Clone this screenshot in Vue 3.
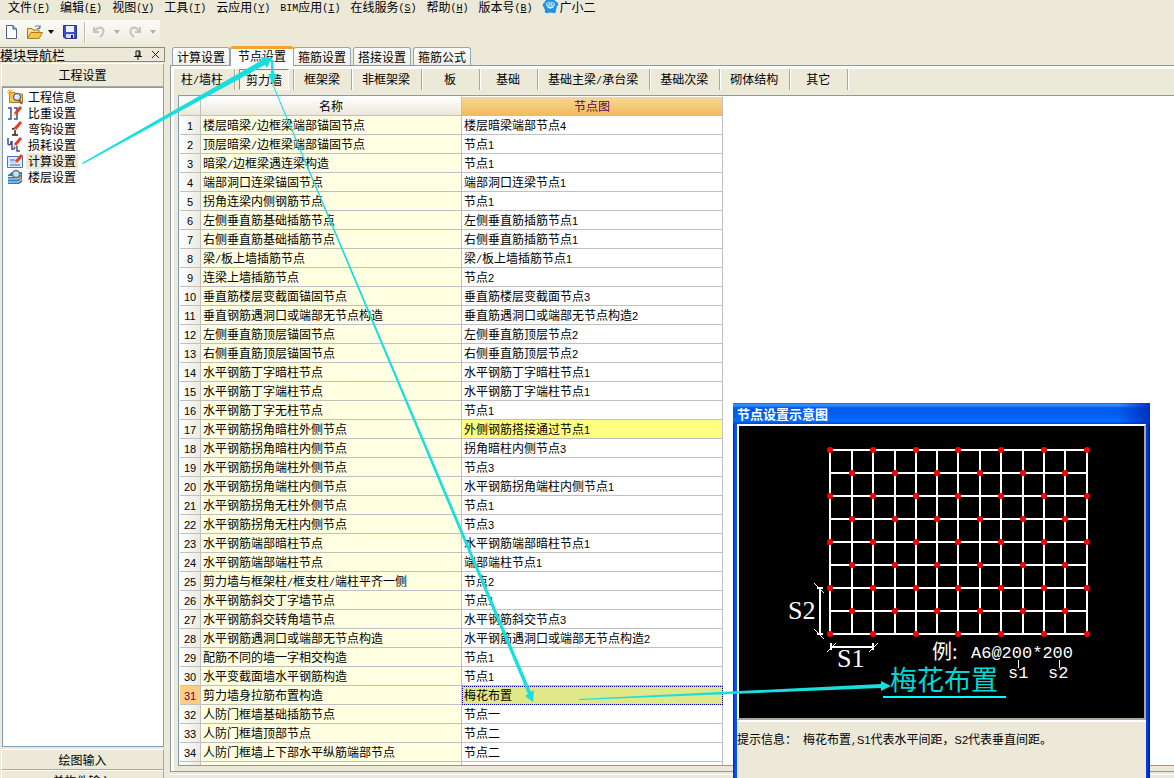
<script setup>
import { h, ref } from 'vue'

// Splits a label into CJK, alphanumeric and punctuation runs, each with its own face.
const Mixed = (props) =>
  (props.text.match(/[A-Za-z0-9]+|[^\w\u0100-\uffff]+|[\u0100-\uffff]+/g) || []).map((run) => {
    if (/^[A-Za-z0-9]/.test(run)) return h('span', { class: 'run-alnum' }, run)
    if (run.charCodeAt(0) < 256) return h('span', { class: 'run-punct' }, run)
    return run
  })
Mixed.props = ['text']

const menus = [
  ['文件', 'F'], ['编辑', 'E'], ['视图', 'V'], ['工具', 'T'], ['云应用', 'Y'],
  ['BIM应用', 'I'], ['在线服务', 'S'], ['帮助', 'H'], ['版本号', 'B'],
]
const tree = ['工程信息', '比重设置', '弯钩设置', '损耗设置', '计算设置', '楼层设置']
const tabs = ['计算设置', '节点设置', '箍筋设置', '搭接设置', '箍筋公式']
const parts = ['柱/墙柱', '剪力墙', '框架梁', '非框架梁', '板', '基础', '基础主梁/承台梁', '基础次梁', '砌体结构', '其它']
const activeTree = ref(4)
const activeTab = ref(1)
const activePart = ref(1)
const activeRow = ref(30)

const rows = [
  ['楼层暗梁/边框梁端部锚固节点', '楼层暗梁端部节点4'],
  ['顶层暗梁/边框梁端部锚固节点', '节点1'],
  ['暗梁/边框梁遇连梁构造', '节点1'],
  ['端部洞口连梁锚固节点', '端部洞口连梁节点1'],
  ['拐角连梁内侧钢筋节点', '节点1'],
  ['左侧垂直筋基础插筋节点', '左侧垂直筋插筋节点1'],
  ['右侧垂直筋基础插筋节点', '右侧垂直筋插筋节点1'],
  ['梁/板上墙插筋节点', '梁/板上墙插筋节点1'],
  ['连梁上墙插筋节点', '节点2'],
  ['垂直筋楼层变截面锚固节点', '垂直筋楼层变截面节点3'],
  ['垂直钢筋遇洞口或端部无节点构造', '垂直筋遇洞口或端部无节点构造2'],
  ['左侧垂直筋顶层锚固节点', '左侧垂直筋顶层节点2'],
  ['右侧垂直筋顶层锚固节点', '右侧垂直筋顶层节点2'],
  ['水平钢筋丁字暗柱节点', '水平钢筋丁字暗柱节点1'],
  ['水平钢筋丁字端柱节点', '水平钢筋丁字端柱节点1'],
  ['水平钢筋丁字无柱节点', '节点1'],
  ['水平钢筋拐角暗柱外侧节点', '外侧钢筋搭接通过节点1'],
  ['水平钢筋拐角暗柱内侧节点', '拐角暗柱内侧节点3'],
  ['水平钢筋拐角端柱外侧节点', '节点3'],
  ['水平钢筋拐角端柱内侧节点', '水平钢筋拐角端柱内侧节点1'],
  ['水平钢筋拐角无柱外侧节点', '节点1'],
  ['水平钢筋拐角无柱内侧节点', '节点3'],
  ['水平钢筋端部暗柱节点', '水平钢筋端部暗柱节点1'],
  ['水平钢筋端部端柱节点', '端部端柱节点1'],
  ['剪力墙与框架柱/框支柱/端柱平齐一侧', '节点2'],
  ['水平钢筋斜交丁字墙节点', '节点1'],
  ['水平钢筋斜交转角墙节点', '水平钢筋斜交节点3'],
  ['水平钢筋遇洞口或端部无节点构造', '水平钢筋遇洞口或端部无节点构造2'],
  ['配筋不同的墙一字相交构造', '节点1'],
  ['水平变截面墙水平钢筋构造', '节点1'],
  ['剪力墙身拉筋布置构造', '梅花布置'],
  ['人防门框墙基础插筋节点', '节点一'],
  ['人防门框墙顶部节点', '节点二'],
  ['人防门框墙上下部水平纵筋端部节点', '节点二'],
]
const changedRow = 16

// Wall mesh of the tie-bar diagram.
const gx = [91, 113, 134, 156, 177, 198, 219, 241, 262, 284, 305, 326, 348]
const gy = [24, 47, 70, 93, 116, 139, 162, 185, 208]
const dots = gy.flatMap((y, j) => gx.filter((_, i) => i % 2 === j % 2).map((x) => ({ x, y })))
</script>

<template>
  <div class="app">
    <nav class="menubar">
      <button v-for="[name, key] in menus" :key="key" class="menu" type="button">
        <template v-if="name.startsWith('BIM')"><span class="mono">BIM</span>{{ name.slice(3) }}</template>
        <template v-else>{{ name }}</template><span class="mono">(<u>{{ key }}</u>)</span>
      </button>
      <button class="menu user" type="button">
        <svg width="17" height="15" viewBox="0 0 17 15">
          <path d="M4 1Q8-1 12 1L16 4Q17 6 15 7L14 11Q14 15 11 14Q8 13 6 14Q2 15 3 11L1 7Q0 5 2 4Z" fill="#1b94e4" />
          <path d="M4 4Q8 1 13 4Q14 9 8 10Q3 9 4 4Z" fill="#64c8fa" />
          <circle cx="6" cy="5" r="1.6" fill="#fff" /><circle cx="11" cy="5" r="1.6" fill="#fff" />
          <circle cx="6" cy="5" r=".8" fill="#123" /><circle cx="11" cy="5" r=".8" fill="#123" />
          <path d="M6 8Q8 10 11 8" stroke="#fff" fill="none" />
        </svg>
        <span>广小二</span>
      </button>
    </nav>

    <div class="toolbar">
      <button type="button" aria-label="新建">
        <svg width="16" height="16" viewBox="0 0 16 16"><path d="M2.500 1.500H9L12.500 5V14.500H2.500Z" fill="#f8fbff" stroke="#54657d" /><path d="M9 1.500V5H12.500" fill="#b8d0ee" stroke="#34455d" /></svg>
      </button>
      <button type="button" aria-label="打开">
        <svg width="18" height="16" viewBox="0 0 18 16"><path d="M1.500 14V4.500H6L7 6H13V8" fill="#f8dc88" stroke="#9b762e" /><path d="M1.500 14.500L5 8.500H16.500L13 14.500Z" fill="#f9c64a" stroke="#a87a22" /><path d="M9 3Q12 0 14 4M14 1V4.500H11" fill="none" stroke="#4b6f98" /></svg>
      </button>
      <svg class="drop" width="6" height="4" viewBox="0 0 6 4"><path d="M0 0H6L3 4Z" fill="#111" /></svg>
      <button type="button" aria-label="保存">
        <svg width="16" height="16" viewBox="0 0 16 16"><path d="M1.500 1.500H14.500V14.500H3L1.500 13Z" fill="#3b50c8" stroke="#29348c" /><path d="M4 2H12V8H4Z" fill="#eef3ff" /><path d="M4 10H12V14H4Z" fill="#d5daf2" /><path d="M9 11H11V14H9Z" fill="#1d2875" /></svg>
      </button>
      <i class="bar-line"></i>
      <button type="button" aria-label="撤销" disabled>
        <svg width="14" height="14" viewBox="0 0 14 14"><path d="M2 2V7H7M2.500 6.500Q6 1 10 3Q14 7 8 12" fill="none" stroke="#c6c4ba" stroke-width="2" /></svg>
      </button>
      <svg class="drop" width="6" height="4" viewBox="0 0 6 4"><path d="M0 0H6L3 4Z" fill="#b3b1a7" /></svg>
      <button type="button" aria-label="恢复" disabled>
        <svg width="14" height="14" viewBox="0 0 14 14"><path d="M12 2V7H7M11.500 6.500Q8 1 4 3Q0 7 6 12" fill="none" stroke="#c6c4ba" stroke-width="2" /></svg>
      </button>
      <svg class="drop" width="6" height="4" viewBox="0 0 6 4"><path d="M0 0H6L3 4Z" fill="#b3b1a7" /></svg>
    </div>

    <div class="body">
      <aside class="sidebar">
        <header class="dock">
          <h2>模块导航栏</h2>
          <button type="button" aria-label="固定"><svg width="8" height="10" viewBox="0 0 8 10"><path d="M2 1H6V6H2ZM5 1V6M0 6.500H8M4 6V10" fill="none" stroke="#111" /></svg></button>
          <button type="button" aria-label="关闭"><svg width="9" height="9" viewBox="0 0 9 9"><path d="M1 1L8 8M8 1L1 8" stroke="#222" /></svg></button>
        </header>
        <button class="group first" type="button">工程设置</button>
        <ul class="tree">
          <li v-for="(t, i) in tree" :key="t">
            <button type="button" :class="{ on: i === activeTree }" @click="activeTree = i">
              <svg width="18" height="16" viewBox="0 0 18 16">
                <g v-if="i === 0"><path d="M2.500 3.500H8L9 5H15.500V13.500H2.500Z" fill="#f2c65a" stroke="#a98029" /><path d="M1 1L5 5M5 1L1 5M3 0V6M0 3H6" stroke="#f4ae18" /><circle cx="10" cy="8" r="3.500" fill="#d9efff" stroke="#716b67" stroke-width="1.500" /><path d="M12 11L15 15" stroke="#8a5a28" stroke-width="2" /></g>
                <g v-else-if="i === 1"><path d="M1 3H4V14H1M7 3H10V14H7" fill="none" stroke="#31528f" stroke-width="1.500" /><path d="M8 9L14 2" stroke="#e24027" stroke-width="3" /><path d="M6 11L8 8L9 10Z" fill="#f2b46c" /></g>
                <g v-else-if="i === 2"><path d="M8 6V14M5 14H11M5 8L10 7" stroke="#222" stroke-width="1.500" /><path d="M8 8L14 1" stroke="#e24027" stroke-width="3" /><path d="M6 10L8 7L9 9Z" fill="#f2b46c" /></g>
                <g v-else-if="i === 3"><path d="M1 1V7Q3 9 4 6V4M5 4V12Q7 13 8 10M10 9V14H13" fill="none" stroke="#31528f" stroke-width="1.500" /><path d="M8 8L14 1" stroke="#e24027" stroke-width="3" /><path d="M6 10L8 7L9 9Z" fill="#f2b46c" /></g>
                <g v-else-if="i === 4"><path d="M.5 3.500H15.500V14.500H.5Z" fill="#dcebff" stroke="#4a78be" /><path d="M3 7H8M3 12H13" stroke="#356ab8" /><path d="M3 9H7" stroke="#92b7e5" /><path d="M9 9L15 2" stroke="#e24027" stroke-width="3" /><path d="M7 11L9 8L10 10Z" fill="#f2b46c" /></g>
                <g v-else><path d="M1 6L5 3H15V13L12 15H1Z" fill="#267dc3" /><path d="M1 7.500H11L14 5M1 10H11L14 8M1 13H11L14 11" fill="none" stroke="#d5efff" /><circle cx="9" cy="5" r="3.500" fill="#c4e4f7" stroke="#777" stroke-width="1.500" /><path d="M12 8L15 12" stroke="#e38b38" stroke-width="2" /></g>
              </svg>
              <span>{{ t }}</span>
            </button>
          </li>
        </ul>
        <button class="group" type="button">绘图输入</button>
        <button class="group" type="button">单构件输入</button>
      </aside>

      <main class="main">
        <div class="tabs" role="tablist">
          <button v-for="(t, i) in tabs" :key="t" type="button" role="tab" :aria-selected="i === activeTab" :class="{ on: i === activeTab }" @click="activeTab = i">{{ t }}</button>
        </div>
        <section class="page">
          <div class="parts">
            <button v-for="(p, i) in parts" :key="p" type="button" :class="{ on: i === activePart }" @click="activePart = i"><span><Mixed :text="p" /></span></button>
          </div>
          <div class="grid">
            <table>
              <colgroup><col class="c-no" /><col class="c-name" /><col class="c-node" /></colgroup>
              <thead><tr><th></th><th>名称</th><th class="hot">节点图</th></tr></thead>
              <tbody>
                <tr v-for="(r, i) in rows" :key="i" :class="{ sel: i === activeRow }" @click="activeRow = i">
                  <th scope="row"><Mixed :text="String(i + 1)" /></th>
                  <td class="name"><Mixed :text="r[0]" /></td>
                  <td :class="{ changed: i === changedRow }"><Mixed :text="r[1]" /></td>
                </tr>
                <tr><th></th><td class="name"></td><td></td></tr>
              </tbody>
            </table>
          </div>
        </section>
        <div class="footer-line"></div>
      </main>
    </div>

    <section class="dialog" aria-label="节点设置示意图">
      <h2>节点设置示意图</h2>
      <div class="content">
        <div class="canvas">
          <svg width="405" height="292" viewBox="0 0 405 292">
            <g stroke="#fff" stroke-width="2">
              <line v-for="x in gx" :key="'x' + x" :x1="x" :x2="x" y1="24" y2="208" />
              <line v-for="y in gy" :key="'y' + y" x1="91" x2="349" :y1="y" :y2="y" />
              <path d="M81 162V208M78 162H84M78 208H84M91 221H135M92 217V224M134 217V224" fill="none" />
            </g>
            <path d="M75 157L85 167M75 203L85 213M88 226L97 217M130 226L139 217" stroke="#fff" />
            <circle v-for="d in dots" :key="d.x + '-' + d.y" :cx="d.x" :cy="d.y" r="3" fill="#f00" />
            <g fill="#fff">
              <text x="49" y="193" class="dim">S2</text>
              <text x="98" y="241" class="dim">S1</text>
              <text x="193" y="233" class="cjk">例:</text>
              <text x="232" y="232" class="eg">A6@200*200</text>
              <text x="269" y="252" class="eg">s1</text>
              <text x="309" y="252" class="eg">s2</text>
            </g>
            <path d="M279.500 234V242M320.500 234V242" stroke="#fff" />
            <text x="151" y="264" class="plum">梅花布置</text>
            <path d="M144 271H267" stroke="#0ff" stroke-width="2" />
          </svg>
        </div>
        <p><Mixed text="提示信息： 梅花布置,S1代表水平间距，S2代表垂直间距。" /></p>
      </div>
    </section>

    <svg class="arrows" width="1174" height="778" viewBox="0 0 1174 778" fill="#18dede">
      <path d="M82 163L262 60L260 57L272 58L267 68L265 65L83 164Z" />
      <path d="M271 60H273L274 74L277 74L273 85L268 74L271 74Z" />
      <path d="M272 84H273L531 692L534 690L533 702L525 696L528 694Z" />
      <path d="M579 699L881 684V681L891 686L881 691V688L579 700Z" />
    </svg>
  </div>
</template>

<style>
html, body { margin: 0; overflow: hidden; }
.run-alnum { font: 11px "Liberation Sans", sans-serif; }
.run-punct { font: 10px "Liberation Mono", monospace; white-space: pre; }
</style>

<style scoped>
.app {
  position: relative; display: flex; flex-direction: column; height: 100vh; overflow: hidden;
  background: #ece9d8; color: #000; font: 12px/16px "Noto Sans CJK SC", sans-serif;
}
.app * { box-sizing: border-box; }
button { margin: 0; padding: 0; border: 0; background: none; color: inherit; font: inherit; white-space: nowrap; }
h2, p, ul { margin: 0; padding: 0; font-size: 12px; font-weight: 400; list-style: none; }
svg { flex: none; }
.mono { font: 10px "Liberation Mono", monospace; vertical-align: 1px; }
.menubar { display: flex; flex: none; gap: 10px; height: 20px; padding-left: 8px; }
.menu { height: 13px; line-height: 13px; }
.user { display: flex; align-items: center; gap: 1px; margin-left: -1px; }
.toolbar {
  display: flex; flex: none; align-items: center; align-self: flex-start; width: 160px; height: 24px; padding-left: 4px;
  background: linear-gradient(#fbfaf6, #efece0); border-radius: 2px;
}
.toolbar button { display: flex; flex: none; margin-right: 6px; }
.toolbar button:disabled { margin-right: 10px; }
.toolbar .drop { margin-right: 8px; margin-left: -2px; }
.bar-line { flex: none; width: 2px; height: 21px; margin: 0 6px 0 0; background: #bdb9a8; border-right: 1px solid #fff; }
.body { display: flex; flex: 1; min-height: 0; }
.sidebar { display: flex; flex: none; flex-direction: column; width: 165px; margin-bottom: -13px; padding-top: 3px; }
.dock { display: flex; flex: none; align-items: center; height: 15px; border: 1px solid #8c8a80; border-left: 0; }
.dock h2 { flex: 1; font-size: 13px; line-height: 13px; }
.dock button { display: flex; margin-right: 4px; }
.dock button:first-of-type { margin-right: 9px; }
.group {
  flex: none; height: 21px; margin: 0 1px; line-height: 16px;
  border: 1px solid; border-color: #fff #aca899 #aca899 #fff;
}
.group.first { height: 24px; margin-top: 1px; }
.tree {
  flex: 1; min-height: 0; margin: 0 1px 2px 2px; padding: 1px 4px; overflow: hidden;
  background: #fff; border: 1px solid #7f9db9;
}
.tree button { display: flex; gap: 1px; height: 16px; line-height: 16px; }
.tree span { padding: 0 2px; }
.tree .on span { background: #ece9d8; }
.main { display: flex; flex: 1; flex-direction: column; min-width: 0; margin-left: 5px; }
.tabs { display: flex; flex: none; align-items: flex-end; gap: 2px; height: 21px; padding-left: 2px; }
.tabs button {
  height: 18px; padding: 0 4px; line-height: 17px; background: linear-gradient(#fff, #f1f0e8);
  border: 1px solid #91a7b4; border-bottom: 0; border-radius: 3px 3px 0 0;
}
.tabs .on {
  z-index: 1; width: 64px; height: 20px; margin: 0 -3px -1px -2px; line-height: 14px; background: #fcfcfe;
  border-top: 3px solid #f5a32c; padding-bottom: 3px;
}
.page {
  display: flex; flex: 1; flex-direction: column; min-height: 0; padding-bottom: 5px;
  border: 1px solid #919b9c; border-right: 0; box-shadow: inset 3px 3px #fcfcfe;
}
.parts { display: flex; flex: none; height: 29px; padding-top: 3px; }
.parts button {
  flex: none; display: flex; justify-content: center; min-width: 58px; height: 21px; padding: 0 11px 0 10px;
  line-height: 19px; border-right: 1px solid #aca899; box-shadow: 1px 0 #fff;
}
.parts .on { padding: 0 4px; }
.parts .on span {
  padding: 0 6px; background: repeating-conic-gradient(#fff 0 25%, #ece9d8 0 50%) 0 0 / 2px 2px;
  border: 1px solid; border-color: #8b887b #fff #fff #8b887b;
}
.grid {
  flex: 1; min-height: 0; margin-left: 7px; padding: 1px 0 0 1px; overflow: hidden;
  background: #fff; border: 1px solid #7f9db9; border-right: 0;
}
table { width: 543px; table-layout: fixed; border-collapse: separate; border-spacing: 0; }
.c-no { width: 21px; }
th, td {
  height: 19px; padding: 0 0 0 2px; overflow: hidden; font-weight: 400; line-height: 18px; text-align: left; white-space: nowrap;
  border-right: 1px solid #c0c0c0; border-bottom: 1px solid #c0c0c0;
}
th { padding: 0; text-align: center; background: linear-gradient(#fff, #ebe8da); }
tbody th { background: linear-gradient(90deg, #fff, #ebeadf); }
thead .hot { color: #600060; background: linear-gradient(#f8d699, #f0bc5c); }
.name { background: #ffffe1; }
.changed { background: #ffff80; }
.sel th { color: #600060; background: #ffcc80; }
.sel td:last-child { background: #e0e88a; outline: 1px dotted #00008b; outline-offset: -1px; }
.footer-line { flex: none; height: 4px; margin-top: 2px; border-top: 1px solid #fff; }
.dialog {
  position: absolute; top: 403px; bottom: 0; left: 733px; display: flex; flex-direction: column; width: 417px;
  background: linear-gradient(90deg, #001fc0, #0054f0 2px, #0054f0 4px, #0040e0 414px, #0018a0);
}
.dialog h2 {
  flex: none; height: 21px; padding-left: 4px; color: #fff; font-size: 13px; font-weight: 700; line-height: 22px;
  background: linear-gradient(90deg, transparent 385px, #0030c0), linear-gradient(#1467dc, #3c96ff 2px, #005ae6 5px, #0060f4 13px, #0070ff 18px, #0040d8);
}
.content { flex: 1; margin: 0 4px; background: #ece9d8; }
.canvas { display: flex; height: 296px; overflow: hidden; background: #000; border: 2px solid; border-color: #fff #aca899 #aca899 #fff; box-shadow: 0 2px #fff; }
.content p { padding-top: 11px; white-space: nowrap; }
.dim { font: 26px "Liberation Serif", serif; }
.cjk { font: 20px "Noto Sans CJK SC", sans-serif; }
.eg { font: 17px "Liberation Mono", monospace; }
.plum { fill: #00d8d8; font: 27px "Noto Sans CJK SC", sans-serif; }
.arrows { position: absolute; inset: 0; z-index: 2; pointer-events: none; }
</style>
